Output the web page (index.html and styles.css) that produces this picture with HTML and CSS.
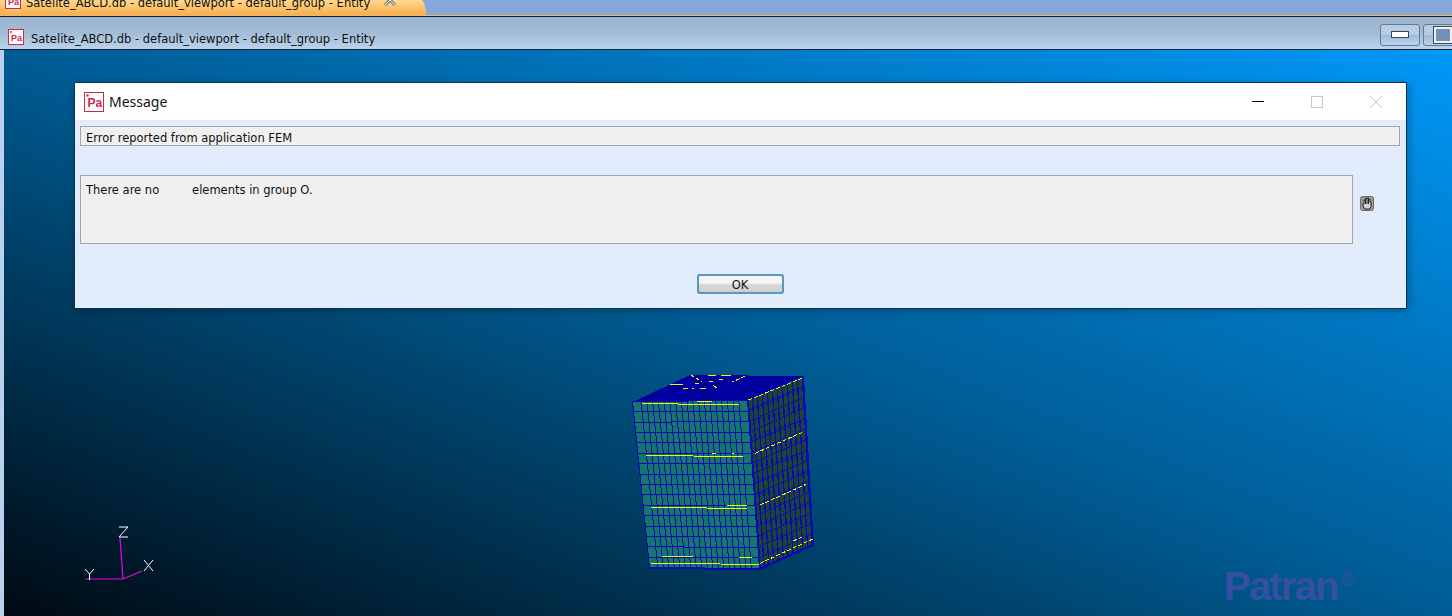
FILE: index.html
```html
<!DOCTYPE html>
<html lang="en">
<head>
    <meta charset="UTF-8">
    <title>Satelite_ABCD.db - default_viewport - default_group - Entity</title>
    <link rel="stylesheet" href="styles.css">
</head>
<body>

<div class="tabstrip">
    <div class="tab">
        <svg class="pa-icon" viewBox="0 0 16 16"><rect x="0.5" y="0.5" width="15" height="15" fill="#fff" stroke="#d0284c"/><text x="3" y="12" class="pa-text">Pa</text></svg>
        <span class="tab-label">Satelite_ABCD.db - default_viewport - default_group - Entity</span>
        <svg class="tab-close" viewBox="0 0 12 12"><path d="M1 1 L11 11 M11 1 L1 11" stroke="#7d7d7d" stroke-width="3"/><path d="M1 1 L11 11 M11 1 L1 11" stroke="#f2efe8" stroke-width="1"/></svg>
    </div>
</div>

<div class="titlebar">
    <svg class="pa-icon" viewBox="0 0 16 16"><rect x="0.5" y="0.5" width="15" height="15" fill="#fff" stroke="#d0284c"/><circle cx="3" cy="3" r="1" fill="#d0284c"/><text x="3" y="12" class="pa-text">Pa</text></svg>
    <span class="titlebar-label">Satelite_ABCD.db - default_viewport - default_group - Entity</span>
    <div class="winbtns">
        <div class="winbtn"><span class="glyph-min"></span></div>
        <div class="winbtn"><span class="glyph-max"></span></div>
    </div>
</div>

<div class="viewport">
    <svg id="mesh" class="mesh" viewBox="620 365 210 215"></svg>

    <svg class="triad" viewBox="70 515 90 70">
        <path d="M120 538 L123 579 M85 579 L123 579 L142 571" fill="none" stroke="#f000f0" stroke-width="1.2"/>
        <path d="M119 527 H128 L119 537 H128" fill="none" stroke="#fff"/>
        <path d="M144 560 L153 571 M153 560 L144 571" fill="none" stroke="#fff"/>
        <path d="M85 569 L89.500 574 L94 569 M89.500 574 V580" fill="none" stroke="#fff"/>
    </svg>

    <div class="watermark">
        <div class="wm-name">Patran<span class="wm-reg">®</span></div>
        <div class="wm-sub">Student Edition</div>
    </div>

    <div class="dialog">
        <div class="dialog-title">
            <svg class="pa-icon big" viewBox="0 0 20 20"><rect x="0.5" y="0.5" width="19" height="19" fill="#fff" stroke="#d0284c"/><circle cx="3.500" cy="3.500" r="1.200" fill="#d0284c"/><text x="3.500" y="15" class="pa-text big">Pa</text></svg>
            <span class="dialog-name">Message</span>
            <div class="dialog-ctrls">
                <svg class="ctrl" viewBox="0 0 12 12"><path d="M0 5.500 H12" stroke="#000"/></svg>
                <svg class="ctrl" viewBox="0 0 12 12"><rect x="0.500" y="0.500" width="11" height="11" fill="none" stroke="#c8c8c8"/></svg>
                <svg class="ctrl" viewBox="0 0 12 12"><path d="M0 0 L12 12 M12 0 L0 12" stroke="#c8c8c8"/></svg>
            </div>
        </div>
        <div class="dialog-body">
            <div class="field header-field">Error reported from application FEM</div>
            <div class="message-row">
                <div class="field message-field">There are no         elements in group O.</div>
                <svg class="hand" viewBox="0 0 14 15">
                    <rect x="0.500" y="0.500" width="13" height="14" rx="2" fill="#9a9a9a" stroke="#6d6d6d"/>
                    <path d="M4.500 13 L2.500 8.500 L4 8 V4 H5.500 V2.500 H7 V2 H8.500 V3.500 H10 V6 H11 V10.500 L10 13 Z M5.500 4 V8 M7 2.500 V8 M8.500 3.500 V8" fill="#d4d4d4" stroke="#222" stroke-width="1"/>
                </svg>
            </div>
            <div class="actions">
                <button class="ok-btn">OK</button>
            </div>
        </div>
    </div>
</div>

<script src="mesh.js"></script>
</body>
</html>
```

FILE: styles.css
```css
/* Estilo geral */
html, body {
    margin: 0;
    height: 100%;
    overflow: hidden;
}

body {
    display: flex;
    flex-direction: column;
    font-family: "DejaVu Sans", sans-serif;
    font-size: 11.5px;
    color: #111;
    background-color: #b9d1ec;
}

/* Barra de abas */
.tabstrip {
    height: 15px;
    flex: none;
    background-color: #86a8d6;
    overflow: hidden;
    border-bottom: 1px solid #efb86c;
}

.tab {
    width: 426px;
    height: 15px;
    display: flex;
    align-items: flex-end;
    padding-left: 5px;
    box-sizing: border-box;
    border-top-right-radius: 10px 30px;
    background: linear-gradient(#ffd88e, #f9ae4c);
    overflow: hidden;
}

.tab .pa-icon {
    flex: none;
    margin-bottom: 6px;
}

.tab-label {
    margin-left: 5px;
    line-height: 16px;
    margin-bottom: 4px;
    white-space: nowrap;
}

.tab-close {
    width: 12px;
    height: 12px;
    flex: none;
    margin-left: 14px;
    margin-bottom: 9px;
}

/* Icone Pa */
.pa-icon {
    width: 16px;
    height: 16px;
}

.pa-icon.big {
    width: 20px;
    height: 20px;
    flex: none;
}

.pa-text {
    font-family: "Liberation Sans", sans-serif;
    font-weight: bold;
    font-size: 9px;
    fill: #d0284c;
}

.pa-text.big {
    font-size: 12px;
}

/* Barra de titulo */
.titlebar {
    height: 34px;
    flex: none;
    display: flex;
    align-items: center;
    padding: 7px 0 0 8px;
    box-sizing: border-box;
    background: linear-gradient(#9bb5d0, #a3bcd6 50%, #bad2ec);
    border-top: 1px solid #1d1d1d;
    border-bottom: 1px solid #12233a;
}

.titlebar-label {
    margin-left: 7px;
    margin-top: 4px;
}

.winbtns {
    margin-left: auto;
    display: flex;
    gap: 3px;
    margin-top: -4px;
    margin-right: -11px;
}

.winbtn {
    width: 40px;
    height: 22px;
    box-sizing: border-box;
    border: 1px solid #64799a;
    border-radius: 3px;
    display: flex;
    align-items: center;
    justify-content: center;
    background: linear-gradient(#b7cde4 50%, #a0bad6 50%, #bcd3ec);
}

.glyph-min {
    width: 16px;
    height: 5px;
    border: 1px solid #3c4658;
    background: #fff;
}

.glyph-max {
    width: 14px;
    height: 12px;
    border: 2px solid #f0f0f0;
    outline: 1px solid #3c4658;
    background: #6f93b8;
}

/* Area 3D */
.viewport {
    flex: 1;
    position: relative;
    margin-left: 4px;
    overflow: hidden;
    background: linear-gradient(to bottom left, #0098f8 0%, #005c94 50%, #000a12 100%);
}

.mesh {
    position: absolute;
    left: 616px;
    top: 315px;
    width: 210px;
    height: 215px;
    shape-rendering: crispEdges;
}

.triad {
    position: absolute;
    left: 66px;
    top: 465px;
    width: 90px;
    height: 70px;
}

.watermark {
    position: absolute;
    left: 1208px;
    top: 506px;
    color: #34509f;
    font-family: "Liberation Sans", sans-serif;
}

.wm-name {
    margin-left: 12px;
    font-size: 40px;
    font-weight: bold;
    letter-spacing: -1.8px;
    line-height: 44px;
}

.wm-reg {
    font-size: 20px;
    font-weight: normal;
    letter-spacing: 0;
    vertical-align: 15px;
    margin-left: 3px;
}

.wm-sub {
    font-size: 21px;
    line-height: 34px;
    white-space: nowrap;
}

/* Janela de mensagem */
.dialog {
    position: absolute;
    left: 70px;
    top: 32px;
    width: 1333px;
    height: 227px;
    box-sizing: border-box;
    border: 1px solid #0c3352;
    display: flex;
    flex-direction: column;
    background-color: #e1ecfd;
    box-shadow: 2px 2px 8px rgba(0, 0, 0, 0.25);
}

.dialog-title {
    height: 37px;
    flex: none;
    display: flex;
    align-items: center;
    padding-left: 9px;
    background-color: #fff;
}

.dialog-name {
    margin-left: 5px;
    font-family: "Noto Sans", sans-serif;
    font-size: 14px;
}

.dialog-ctrls {
    margin-left: auto;
    display: flex;
    gap: 47px;
    margin-right: 24px;
}

.ctrl {
    width: 12px;
    height: 12px;
}

.dialog-body {
    flex: 1;
    padding: 6px 6px 0 5px;
    display: flex;
    flex-direction: column;
}

.field {
    box-sizing: border-box;
    background-color: #efefef;
    border: 1px solid #a5a5a5;
    padding-left: 5px;
}

.header-field {
    height: 20px;
    line-height: 23px;
}

.message-row {
    margin-top: 29px;
    display: flex;
    gap: 7px;
}

.message-field {
    width: 1273px;
    height: 69px;
    padding-top: 7px;
    white-space: pre;
}

.hand {
    width: 14px;
    height: 15px;
    margin-top: 21px;
}

.actions {
    margin-top: 30px;
    display: flex;
    justify-content: center;
}

.ok-btn {
    width: 87px;
    height: 20px;
    padding: 2px 0 0;
    font: inherit;
    color: #111;
    border: 2px solid #3aa3d8;
    border-radius: 3px;
    background: linear-gradient(#f4f4f4 45%, #d8d8d8 55%, #cfcfcf);
    outline: 1px solid #7d8ea4;
    outline-offset: -1px;
}
```

FILE: mesh.js
```js
// desenha a malha do satelite, coordenadas da pagina
const NS = "http://www.w3.org/2000/svg";
const mesh = document.getElementById("mesh");

function add(tag, attrs) {
  const el = document.createElementNS(NS, tag);
  for (const k in attrs) el.setAttribute(k, attrs[k]);
  mesh.appendChild(el);
}

// ponto dentro de um quadrilatero (tl, tr, br, bl)
function lerpQuad(q, u, v) {
  const topX = q[0][0] + (q[1][0] - q[0][0]) * u;
  const topY = q[0][1] + (q[1][1] - q[0][1]) * u;
  const botX = q[3][0] + (q[2][0] - q[3][0]) * u;
  const botY = q[3][1] + (q[2][1] - q[3][1]) * u;
  return [topX + (botX - topX) * v, topY + (botY - topY) * v];
}

// celulas sem contorno: a cor de fundo da face faz as linhas azuis
function drawFace(q, edges, rows, fill, line, gapX, gapY) {
  add("polygon", { points: q.map(p => p.join(",")).join(" "), fill: line, stroke: line, "stroke-width": 2 });
  for (let r = 0; r < rows; r++) {
    for (let c = 0; c < edges.length - 1; c++) {
      const v0 = r / rows;
      const v1 = (r + 1) / rows;
      const a = lerpQuad(q, edges[c], v0);
      const b = lerpQuad(q, edges[c + 1], v0);
      const d = lerpQuad(q, edges[c + 1], v1);
      const e = lerpQuad(q, edges[c], v1);
      const pts = [
        [a[0], a[1]],
        [b[0] - gapX, b[1]],
        [d[0] - gapX, d[1] - gapY],
        [e[0], e[1] - gapY]
      ];
      add("polygon", { points: pts.map(p => p.join(",")).join(" "), fill: fill });
    }
  }
}

const front = [[633, 402], [748, 401], [760, 569], [650, 568]];
const side = [[748, 401], [803, 377], [813, 545], [760, 569]];

// colunas da frente: a primeira e a ultima sao mais largas
const frontEdges = [0];
for (let i = 0; i <= 17; i++) frontEdges.push(0.075 + i * 0.85 / 17);
frontEdges.push(1);

const sideEdges = [];
for (let i = 0; i <= 11; i++) sideEdges.push(i / 11);

add("polygon", { points: "633,402 690,375 803,376 748,401", fill: "#00009e" });
drawFace(side, sideEdges, 16, "#1b4436", "#0a0ab4", 1.4, 1);
drawFace(front, frontEdges, 16, "#14766c", "#0a0ab4", 1, 1);

// linhas amarelas, medidas no recorte ampliado 3x
const yellow = [
  [65,115,175,117], [175,119,358,118], [230,109,275,109],
  [78,270,220,270], [222,274,370,274], [275,265,288,265], [335,265,342,265],
  [92,427,260,428], [262,431,382,430], [320,421,382,421],
  [125,574,220,574], [357,577,397,577], [92,595,300,595], [302,598,418,598],
  [265,31,288,31], [303,31,332,31], [150,57,188,57], [190,70,205,70],
  [215,70,222,70], [240,70,258,70], [225,55,238,55], [268,48,280,48],
  [298,44,310,44]
];
const dotted = [
  [385,105,545,40], [405,265,545,203], [420,420,558,358], [420,595,578,522],
  [520,528,550,514], [213,30,245,50], [375,33,335,52], [280,62,290,68]
];

function toPage(v, base) { return base + v / 3; }

yellow.forEach(l => add("line", {
  x1: toPage(l[0], 620), y1: toPage(l[1], 365), x2: toPage(l[2], 620), y2: toPage(l[3], 365),
  stroke: "#f4f400", "stroke-width": 1
}));
dotted.forEach(l => add("line", {
  x1: toPage(l[0], 620), y1: toPage(l[1], 365), x2: toPage(l[2], 620), y2: toPage(l[3], 365),
  stroke: "#f4f400", "stroke-width": 1, "stroke-dasharray": "4 2"
}));
```
